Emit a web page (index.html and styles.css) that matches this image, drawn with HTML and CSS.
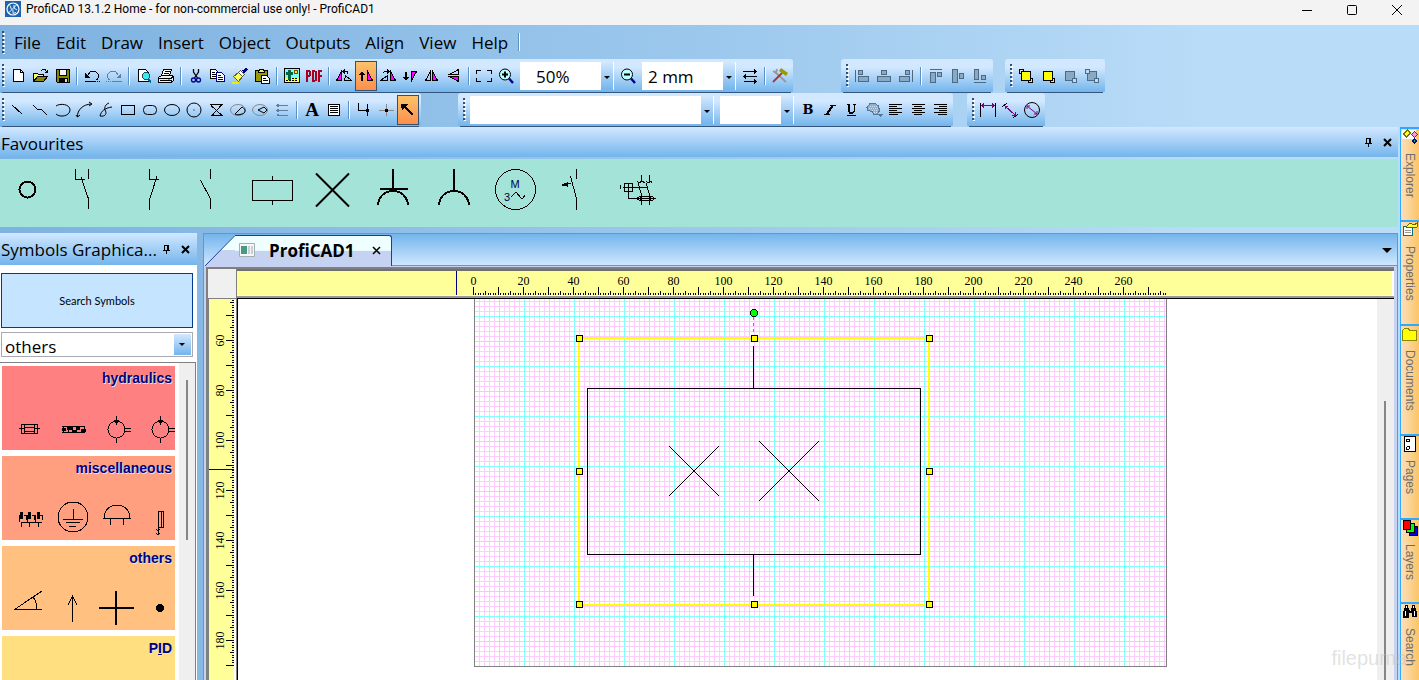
FILE: index.html
```html
<!DOCTYPE html>
<html lang="en">
<head>
<meta charset="utf-8">
<title>ProfiCAD 13.1.2 Home - for non-commercial use only! - ProfiCAD1</title>
<link rel="stylesheet" href="styles.css">
</head>
<body>
<div class="app">
  <header class="titlebar">
    <svg class="logo" width="16" height="16" viewBox="0 0 16 16"><rect width="16" height="16" fill="#1f62ad"/><circle cx="8" cy="8" r="6" fill="none" stroke="#fff" stroke-width="1.2"/><path d="M3.500 12L12 3.500M5 4.500l1.500 4M8 8.500v4l3-1M9 4v3l3 2" stroke="#dff" fill="none"/></svg>
    <h1 class="title">ProfiCAD 13.1.2 Home - for non-commercial use only! - ProfiCAD1</h1>
    <div class="winbtns">
      <button class="winbtn" aria-label="Minimize"><svg width="12" height="12"><path d="M1 6.500h10"/></svg></button>
      <button class="winbtn" aria-label="Maximize"><svg width="12" height="12"><rect x="1.500" y="1.500" width="9" height="9" rx="1"/></svg></button>
      <button class="winbtn" aria-label="Close"><svg width="12" height="12"><path d="M1 1l10 10M11 1L1 11"/></svg></button>
    </div>
  </header>

  <nav class="menubar">
    <span class="grip"></span>
    <button class="menu">File</button><button class="menu">Edit</button><button class="menu">Draw</button><button class="menu">Insert</button><button class="menu">Object</button><button class="menu">Outputs</button><button class="menu">Align</button><button class="menu">View</button><button class="menu">Help</button>
    <span class="sep"></span>
  </nav>

  <div class="toolrow">
    <div class="toolbar first">
      <span class="grip"></span>
      <button class="tool" aria-label="New"><svg viewBox="0 0 16 16"><path fill="#fff" stroke="#000" d="M3.500 1.500h7l3 3v9h-10z"/><path stroke="#000" fill="none" d="M10.500 1.500v3h3"/></svg></button>
      <button class="tool" aria-label="Open"><svg viewBox="0 0 16 16"><path fill="#ff6" stroke="#000" d="M1.500 13.500v-8h4l1 1h5v3"/><path fill="#880" stroke="#000" d="M1.500 13.500l4-5h10l-4 5z"/><path fill="none" stroke="#000" d="M9 2.500l2-1h2l2 3M15.500 1.500v3h-3"/></svg></button>
      <button class="tool" aria-label="Save"><svg viewBox="0 0 16 16"><path fill="#880" stroke="#000" d="M2.500 1.500h13v13h-12l-1-1z"/><path fill="#f4f4f4" stroke="#000" d="M5.500 1.500h7v6h-7z"/><path fill="#000" d="M5 10h9v5H5z"/><path fill="#ddd" d="M11 11h2v3h-2z"/></svg></button>
      <span class="sep"></span>
      <button class="tool" aria-label="Undo"><svg viewBox="0 0 16 16"><path fill="none" stroke="#000" d="M3.500 7.500l3-4h5l3 3v3l-2 2.500M1 13.500h10"/><path d="M1 5v5h5z"/><path stroke="#000" stroke-dasharray="1 1" d="M11 13.500h5"/></svg></button>
      <button class="tool" aria-label="Redo"><svg viewBox="0 0 16 16"><path fill="none" stroke="#5f7f9c" d="M12.500 7.500l-3-4h-5l-3 3v3l2 2.500M6 13.500h10"/><path fill="#5f7f9c" d="M15 5v5h-5z"/><path stroke="#5f7f9c" stroke-dasharray="1 1" d="M0 13.500h5"/></svg></button>
      <span class="sep"></span>
      <button class="tool" aria-label="Print preview"><svg viewBox="0 0 16 16"><path fill="#fff" stroke="#000" d="M2.500 1.500h7l3 3v9h-10z"/><circle cx="10" cy="8" r="3.500" fill="#3ee" stroke="#246"/><path stroke="#068" stroke-width="2" d="M12 11l3 3.500"/></svg></button>
      <button class="tool" aria-label="Print"><svg viewBox="0 0 16 16"><path fill="#fff" stroke="#000" d="M5.500 1.500h8l-2 6h-8z"/><path stroke="#000" d="M7 3.500h5M6 5.500h5"/><path fill="#eee" stroke="#000" d="M.500 9.500l3-2h11l1 1v4l-2 2h-13z"/><path fill="none" stroke="#000" d="M1 10.500h12l2-2M2 12.500h11v2"/><path stroke="#aa0" d="M10 11.500h2"/></svg></button>
      <span class="sep"></span>
      <button class="tool" aria-label="Cut"><svg viewBox="0 0 16 16" class="smooth"><path fill="none" stroke="#000" stroke-width="1.300" d="M5.500 1v3l4 6M10.500 1v3l-4 6"/><circle cx="5.500" cy="12" r="2" fill="none" stroke="#008" stroke-width="1.300"/><circle cx="10.500" cy="12" r="2" fill="none" stroke="#008" stroke-width="1.300"/></svg></button>
      <button class="tool" aria-label="Copy"><svg viewBox="0 0 16 16"><path fill="#fff" stroke="#000" d="M.500 1.500h5l3 3v6h-8z"/><path stroke="#000" d="M2 4.500h3M2 6.500h4M2 8.500h4"/><path fill="#fff" stroke="#008" d="M6.500 4.500h5l3 3v6h-8z"/><path stroke="#008" d="M8 7.500h3M8 9.500h5M8 11.500h5"/></svg></button>
      <button class="tool" aria-label="Format painter"><svg viewBox="0 0 16 16"><path fill="#ff5" stroke="#660" d="M1.500 8.500l5-4 4 4-4 5z"/><path fill="#fff" stroke="#555" d="M6.500 4.500l2-2 4 4-2 2z"/><path stroke="#008" stroke-width="3" d="M11 4l4-3.500"/><path stroke="#ee0" stroke-width="2" d="M0 15h7"/></svg></button>
      <button class="tool" aria-label="Paste"><svg viewBox="0 0 16 16"><path fill="#990" stroke="#000" d="M1.500 2.500h12v11h-12z"/><path fill="#ee6" stroke="#000" d="M4.500 3.500l1-2h4l1 2v1h-6z"/><path fill="#fff" stroke="#000" d="M7.500 7.500h5l3 3v5h-8z"/><path stroke="#000" d="M9 10.500h3M9 12.500h5"/></svg></button>
      <span class="sep"></span>
      <button class="tool" aria-label="Image"><svg viewBox="0 0 16 16"><path fill="#7ff" stroke="#000" d="M.500 .500h15v14h-15z"/><path fill="#ff3" d="M1 10h14v4H1z"/><path fill="#064" d="M2 4h2V2h3v2h2v3H7v5H4V7H2z"/><circle cx="12" cy="4" r="1.800" fill="#fe0" stroke="#840"/><path stroke="#000" stroke-dasharray="2 1" d="M8 10.500h6M2 12.500h12"/></svg></button>
      <button class="tool" aria-label="Export PDF"><svg viewBox="0 0 16 16"><path fill="none" stroke="#a80020" stroke-width="2" d="M1 14V3h2l1 1v3l-1 1H1M7 3v10h1l2-1V4L8 3zM13 14V3h3M13 8h3"/></svg></button>
      <span class="sep"></span>
      <button class="tool" aria-label="Rotate left"><svg viewBox="0 0 16 16"><path fill="#f0f" stroke="#000" d="M.500 12.500h5v-9z"/><path fill="none" stroke="#000" d="M8.500 12.500h7l-6-5zM7 3.500h4l1 2M9 1.500l-2 2 2 2"/></svg></button>
      <button class="tool on" aria-label="Default orientation" aria-pressed="true"><svg viewBox="0 0 16 16"><path stroke="#000" stroke-width="1.500" d="M4 4v9"/><path d="M1 7h6L4 3z"/><path fill="#f0f" stroke="#000" d="M9.500 3.500v9h5z"/></svg></button>
      <button class="tool" aria-label="Rotate right"><svg viewBox="0 0 16 16"><path fill="#f0f" stroke="#000" d="M10.500 3.500v9h5z"/><path fill="none" stroke="#000" d="M.500 12.500h7v-5zM3 5l2-1.500h4M7 1.500l2 2-2 2"/></svg></button>
      <button class="tool" aria-label="Rotate 180"><svg viewBox="0 0 16 16"><path stroke="#000" stroke-width="1.500" d="M4 4v6"/><path d="M1 9h6L4 13z"/><path fill="#f0f" stroke="#000" d="M9.500 12.500v-9h5z"/></svg></button>
      <button class="tool" aria-label="Flip horizontal"><svg viewBox="0 0 16 16"><path fill="none" stroke="#000" d="M6.500 3.500v9h-5z"/><path fill="#f0f" stroke="#000" d="M8.500 3.500v9h5z"/></svg></button>
      <button class="tool" aria-label="Flip vertical"><svg viewBox="0 0 16 16"><path fill="none" stroke="#000" d="M12.500 1.500v5h-9z"/><path fill="#f0f" stroke="#000" d="M12.500 13.500v-5h-9z"/></svg></button>
      <span class="sep"></span>
      <button class="tool" aria-label="Fit page"><svg viewBox="0 0 16 16"><path fill="none" stroke="#000" d="M5 2.500H.500V6M11 2.500h4.500V6M5 13.500H.500V10M11 13.500h4.500V10"/></svg></button>
      <button class="tool" aria-label="Zoom in"><svg viewBox="0 0 16 16" class="smooth"><circle cx="7" cy="6.500" r="5.500" fill="#bff" stroke="#000"/><path stroke="#000" stroke-width="2" d="M4 6.500h6M7 3.500v6"/><path stroke="#009" stroke-width="2.500" d="M11 10.500l4 4.500"/></svg></button>
      <span class="combo zoomc"><select aria-label="Zoom"><option>50%</option></select></span>
      <button class="tool" aria-label="Zoom out"><svg viewBox="0 0 16 16" class="smooth"><circle cx="7" cy="6.500" r="5.500" fill="#bff" stroke="#000"/><path stroke="#000" stroke-width="2" d="M4 6.500h6"/><path stroke="#009" stroke-width="2.500" d="M11 10.500l4 4.500"/></svg></button>
      <span class="combo gridc"><select aria-label="Grid step"><option>2 mm</option></select></span>
      <button class="tool" aria-label="Swap wires"><svg viewBox="0 0 16 16"><path fill="none" stroke="#000" d="M1 3.500h13M12 1.500l2 2-2 2M2 8.500h13M4 6.500l-2 2 2 2M2 13.500h12M12 11.500l2 2-2 2"/></svg></button>
      <span class="sep"></span>
      <button class="tool" aria-label="Settings"><svg viewBox="0 0 16 16" class="smooth"><path stroke="#999" stroke-width="2" d="M3 4l11 10"/><path fill="none" stroke="#999" stroke-width="2" d="M1 3l3 2 1-4"/><path stroke="#a33" stroke-width="1.800" d="M1 14l9-9"/><path stroke="#990" stroke-width="3.500" d="M8 1.500l7 5"/></svg></button>
    </div>

    <div class="toolbar gap-l">
      <span class="grip"></span>
      <button class="tool" aria-label="Align left"><svg viewBox="0 0 16 16" class="dis"><path d="M1.500 2v12M4.500 2.500h4v4h-4zM4.500 8.500h10v5h-10z"/></svg></button>
      <button class="tool" aria-label="Align centre"><svg viewBox="0 0 16 16" class="dis"><path d="M5.500 2.500h5v4h-5zM1.500 8.500h13v5h-13z"/></svg></button>
      <button class="tool" aria-label="Align right"><svg viewBox="0 0 16 16" class="dis"><path d="M14.500 2v12M7.500 2.500h4v4h-4zM1.500 8.500h10v5h-10z"/></svg></button>
      <span class="sep"></span>
      <button class="tool" aria-label="Align top"><svg viewBox="0 0 16 16" class="dis"><path d="M2 1.500h12M2.500 4.500h5v10h-5zM9.500 4.500h4v4h-4z"/></svg></button>
      <button class="tool" aria-label="Align middle"><svg viewBox="0 0 16 16" class="dis"><path d="M2.500 1.500h5v13h-5zM9.500 5.500h4v5h-4z"/></svg></button>
      <button class="tool" aria-label="Align bottom"><svg viewBox="0 0 16 16" class="dis"><path d="M2 14.500h12M2.500 1.500h4v10h-4zM9.500 7.500h4v4h-4z"/></svg></button>
    </div>

    <div class="toolbar gap-s">
      <span class="grip"></span>
      <button class="tool" aria-label="Bring to front"><svg viewBox="0 0 16 16"><path fill="#cde" stroke="#000" d="M1.500 1.500h4v4h-4zM10.500 10.500h4v4h-4z"/><path fill="#ff0" stroke="#000" d="M3.500 3.500h9v9h-9z"/></svg></button>
      <button class="tool" aria-label="Bring forward"><svg viewBox="0 0 16 16"><path fill="#cde" stroke="#000" d="M10.500 10.500h4v4h-4z"/><path fill="#ff0" stroke="#000" d="M3.500 3.500h9v9h-9z"/></svg></button>
      <button class="tool" aria-label="Send backward"><svg viewBox="0 0 16 16"><path fill="#8aa9c4" stroke="#4d6a85" d="M3.500 3.500h9v9h-9z"/><path fill="#bcd9f5" stroke="#4d6a85" d="M10.500 10.500h4v4h-4z"/></svg></button>
      <button class="tool" aria-label="Send to back"><svg viewBox="0 0 16 16"><path fill="#8aa9c4" stroke="#4d6a85" d="M3.500 3.500h9v9h-9z"/><path fill="#bcd9f5" stroke="#4d6a85" d="M1.500 1.500h4v4h-4zM10.500 10.500h4v4h-4z"/></svg></button>
    </div>
  </div>

  <div class="toolrow">
    <div class="toolbar first">
      <span class="grip"></span>
      <button class="tool" aria-label="Line"><svg viewBox="0 0 16 16" class="ln"><path d="M2 3l10 9"/></svg></button>
      <button class="tool" aria-label="Polyline"><svg viewBox="0 0 16 16" class="ln"><path d="M1 3l4 4h4l6 6"/></svg></button>
      <button class="tool" aria-label="Arc"><svg viewBox="0 0 16 16" class="ln smooth"><path d="M2 4c4-3 14-2 14 4s-10 8-14 4"/></svg></button>
      <button class="tool" aria-label="Curve"><svg viewBox="0 0 16 16" class="ln smooth"><path d="M1.500 15C1 8 7 2.500 15 2M0 13l1.500 2L4 13M13 0l3 2-3 2"/></svg></button>
      <button class="tool" aria-label="Bezier"><svg viewBox="0 0 16 16" class="ln smooth"><path d="M2 14c6 1 7-3 5-6-1-3 1-6 4-7M2 14c1-5 5-8 12-9"/></svg></button>
      <button class="tool" aria-label="Rectangle"><svg viewBox="0 0 16 16" class="ln"><path d="M1.500 3.500h13v9h-13z"/></svg></button>
      <button class="tool" aria-label="Rounded rectangle"><svg viewBox="0 0 16 16" class="ln smooth"><rect x="1.500" y="3.500" width="13" height="9" rx="4"/></svg></button>
      <button class="tool" aria-label="Ellipse"><svg viewBox="0 0 16 16" class="ln smooth"><ellipse cx="8" cy="8" rx="7.500" ry="5.500"/></svg></button>
      <button class="tool" aria-label="Circle"><svg viewBox="0 0 16 16" class="ln smooth"><circle cx="8" cy="8" r="7"/><path d="M7.500 8h1"/></svg></button>
      <button class="tool" aria-label="Polygon"><svg viewBox="0 0 16 16" class="ln"><path d="M2 2.500h12L4 13.500h10L3 3.500"/></svg></button>
      <button class="tool" aria-label="Pie"><svg viewBox="0 0 16 16" class="ln smooth"><ellipse cx="8" cy="8" rx="7.500" ry="5.500" stroke="#888"/><path d="M5 12l7-7c4 2 4 6 0 7-3 1-5 1-7 0"/></svg></button>
      <button class="tool" aria-label="Segment"><svg viewBox="0 0 16 16" class="ln smooth"><ellipse cx="8" cy="8" rx="7.500" ry="5.500" stroke="#888"/><path d="M15 8l-3-3-6 3 6 3z"/></svg></button>
      <button class="tool" aria-label="Bus"><svg viewBox="0 0 16 16" class="ln"><path stroke="#5f7f9c" d="M3 3.500h11M3 8.500h11M3 13.500h11M5 2l-2 1.500 2 1.500M5 7L3 8.500 5 10M5 12l-2 1.500"/></svg></button>
      <span class="sep"></span>
      <button class="tool glyph serif" aria-label="Text">A</button>
      <button class="tool" aria-label="Text frame"><svg viewBox="0 0 16 16" class="ln"><path fill="#fff" d="M2.500 2.500h11v11h-11z"/><path d="M4 4.500h8M4 6.500h8M4 8.500h8M4 10.500h8"/></svg></button>
      <span class="sep"></span>
      <button class="tool" aria-label="Wire"><svg viewBox="0 0 16 16" class="ln"><path d="M2.500 1v7.500h9M11.500 2v12"/><path class="fill" stroke="none" d="M10 7h3v3h-3z"/></svg></button>
      <button class="tool" aria-label="Junction"><svg viewBox="0 0 16 16" class="ln"><path stroke="#888" d="M1 8.500h15M8.500 2v12"/><path class="fill" stroke="none" d="M7 7h3v3H7z"/></svg></button>
      <button class="tool on" aria-label="Select" aria-pressed="true"><svg viewBox="0 0 16 16"><path stroke="#000" stroke-width="2" d="M5 5l8 8"/><path d="M1 2h7L2 9z"/></svg></button>
    </div>

    <div class="toolbar gap-l2">
      <span class="grip"></span>
      <span class="combo fontc"><select aria-label="Font"><option></option></select></span>
      <span class="combo sizec"><select aria-label="Font size"><option></option></select></span>
      <button class="tool glyph" aria-label="Bold"><b>B</b></button>
      <button class="tool" aria-label="Italic"><svg viewBox="0 0 16 16"><path stroke="#000" stroke-width="2" d="M11 3L5 12"/><path stroke="#000" d="M8 3.500h6M2 12.500h6"/></svg></button>
      <button class="tool" aria-label="Underline"><svg viewBox="0 0 16 16"><path fill="none" stroke="#000" stroke-width="2" d="M5 2v7l1 2h3"/><path fill="none" stroke="#000" d="M3 2.500h3M9 2.500h3M10.500 3v6l-2 2M3 13.500h9"/></svg></button>
      <button class="tool" aria-label="Font colour"><svg viewBox="0 0 16 16"><path fill="#8fb0cf" stroke="#54789a" d="M4 1.500h5l3 2 1 3v3l-2 3H8l-2-3-4-1-1-3z"/><path stroke="#cfe3f5" stroke-dasharray="1 1" d="M4 4.500h7M3 6.500h9M6 8.500h6M8 10.500h3"/><path fill="#54789a" d="M11 12h6l-3 3z"/></svg></button>
      <button class="tool" aria-label="Text left"><svg viewBox="0 0 16 16" class="ln"><path d="M1 2.500h13M1 4.500h8M1 6.500h13M1 8.500h8M1 10.500h13M1 12.500h9"/></svg></button>
      <button class="tool" aria-label="Text centre"><svg viewBox="0 0 16 16" class="ln"><path d="M2 2.500h13M4 4.500h8M2 6.500h13M4 8.500h8M2 10.500h13M4 12.500h8"/></svg></button>
      <button class="tool" aria-label="Text right"><svg viewBox="0 0 16 16" class="ln"><path d="M2 2.500h13M7 4.500h8M2 6.500h13M7 8.500h8M2 10.500h13M6 12.500h9"/></svg></button>
    </div>

    <div class="toolbar gap-m">
      <span class="grip"></span>
      <button class="tool" aria-label="Linear dimension"><svg viewBox="0 0 16 16"><path stroke="#000" d="M.500 1v14M15.500 1v14"/><path fill="none" stroke="#80007f" d="M1 3.500h14M4 1.500l-2 2 2 2M12 1.500l2 2-2 2"/></svg></button>
      <button class="tool" aria-label="Aligned dimension"><svg viewBox="0 0 16 16"><path stroke="#000" d="M0 5l5-4M11 16l5-4"/><path fill="none" stroke="#80007f" d="M3 4l10 9M3 7V4h3M13 10v3h-3"/></svg></button>
      <button class="tool" aria-label="Diameter"><svg viewBox="0 0 16 16" class="smooth"><circle cx="8" cy="8" r="7.500" fill="none" stroke="#000"/><path fill="none" stroke="#80007f" d="M3 4l10 8M3 7V4h3M13 9v3h-3"/></svg></button>
    </div>
  </div>

  <div class="work">
    <div class="left">
      <section class="favs">
        <div class="phead"><h2>Favourites</h2>
          <button class="hbtn" aria-label="Pin"><svg width="9" height="9" viewBox="0 0 9 9"><path d="M2.500 0v5M2 .500h5M5.500 0v5M6.500 0v5M1 5.500h7M4.500 5v4"/></svg></button>
          <button class="hbtn" aria-label="Close"><svg width="9" height="9" viewBox="0 0 9 9" class="x"><path d="M1 1l7 7M8 1L1 8"/></svg></button>
        </div>
        <div class="strip">
          <button class="fav" aria-label="Terminal"><svg class="bold"><circle cx="27.500" cy="30.500" r="8"/></svg></button>
          <button class="fav" aria-label="Changeover contact"><svg><path d="M14.500 10v10.500h9M27.500 10v10M20 18l7.500 22v10"/></svg></button>
          <button class="fav" aria-label="Break contact"><svg><path d="M27.500 10v10.500h9M35 17l-7.500 24v10"/></svg></button>
          <button class="fav" aria-label="Make contact"><svg><path d="M27.500 10v10M17.500 21l10 19v10"/></svg></button>
          <button class="fav" aria-label="Coil"><svg><path d="M8.500 21.500h40v20h-40zM28.500 17v4M28.500 42v4"/></svg></button>
          <button class="fav" aria-label="Lamp"><svg class="bold smooth"><path d="M11 14.500l33 33M44 14.500l-33 33"/></svg></button>
          <button class="fav" aria-label="Socket with earth"><svg class="bold"><path d="M27 10v21M14 30h28M12 46c1-9 7-14 15-14s14 5 15 14"/></svg></button>
          <button class="fav" aria-label="Socket"><svg class="bold"><path d="M27 10v21M12 46c1-9 7-14 15-14s14 5 15 14"/></svg></button>
          <button class="fav" aria-label="Motor"><svg><circle cx="27.500" cy="30.500" r="20"/><text x="27" y="29" text-anchor="middle" class="m">M</text><text x="16" y="42" class="m">3</text><path d="M23 38l5-5 5 6h2l2-3"/></svg></button>
          <button class="fav" aria-label="Pressure switch"><svg><path d="M27.500 10v10M21.500 17l6 23v11M13 26l9-2"/><path class="fill" d="M13 26l5-2v3z"/></svg></button>
          <button class="fav" aria-label="Motor protection"><svg><path d="M10.500 26v4M14.500 24.500h8v8h-8zM18.500 24v9M13 28.500h25M18 33v6.500h8M26 39.500h20M26 39.500l4-2h12l3 2-3 2H30zM30.500 37.500h10v4h-10zM31.500 16v6M39.500 16v6M27 22l2 2 3-2 3 2M36 22l2 2 3-2 1 2M28 24l3 10v12M36 24l3 10v12"/></svg></button>
        </div>
      </section>

      <div class="lower">
        <section class="symbols">
          <div class="phead"><h2>Symbols Graphica...</h2>
            <button class="hbtn" aria-label="Pin"><svg width="9" height="9" viewBox="0 0 9 9"><path d="M2.500 0v5M2 .500h5M5.500 0v5M6.500 0v5M1 5.500h7M4.500 5v4"/></svg></button>
            <button class="hbtn" aria-label="Close"><svg width="9" height="9" viewBox="0 0 9 9" class="x"><path d="M1 1l7 7M8 1L1 8"/></svg></button>
          </div>
          <div class="sbody">
            <button class="search">Search Symbols</button>
            <span class="combo libc"><select aria-label="Symbol group"><option>others</option></select></span>
            <div class="list">
              <div class="groups">
                <div class="group red"><h3>hydraulics</h3><div class="cells">
                  <svg><path d="M14.500 18.500h16v9h-16zM17.500 21.500h10v4h-10zM17.500 18v9M27.500 18v9M12 22.500h5M28 22.500h5"/></svg>
                  <svg><path d="M11 20.500h23M11 26.500h23M12.500 20v6M17.500 20v6M33.500 20v6"/><path class="thick" d="M11 23.500h4M16 22.500h6M21 25h5M25 22.500h4M30 24h5"/></svg>
                  <svg><circle cx="21.500" cy="23.500" r="8.500"/><path d="M21.500 10v5M21.500 32v5M30 22.500h6M30 25.500h6"/><path class="fill" d="M19 14h5l-2.500 4z"/></svg>
                  <svg><circle cx="21.500" cy="23.500" r="8.500"/><path d="M21.500 10v5M21.500 32v5M30 22.500h6M30 25.500h6"/><path class="fill" d="M19 14h5l-2.500 4z"/></svg>
                </div></div>
                <div class="group coral"><h3>miscellaneous</h3><div class="cells">
                  <svg><path d="M14 26.500h21M12.500 19v7M20.500 19v7M28.500 19v7M14.500 27v4M22.500 27v4M31.500 27v4M17 19.500h2v4M25 19.500h2v4M33 19.500h2v4"/><path class="thick" d="M14.500 16v7M22.500 16v7M31 16v7"/></svg>
                  <svg><circle cx="22" cy="21" r="15"/><path d="M22.500 13v10M12 23.500h20M15 26.500h14M18 30.500h7"/></svg>
                  <svg><path d="M8 22.500h28M9 22c0-17 26-17 26 0M15.500 23v6M28.500 23v6"/></svg>
                  <svg><path d="M19.500 15.500h5v16h-5zM22.500 16v15M19.500 32v6M17 33l2 2 2-2M17 37l2 2 2-2"/></svg>
                </div></div>
                <div class="group orange"><h3>others</h3><div class="cells">
                  <svg><path d="M35 23.500H7.500L35 5M26 11c3 4 4 8 4 12"/></svg>
                  <svg><path d="M21.500 9v27M17 19l4.500-9 4.500 9"/></svg>
                  <svg class="bold"><path d="M21 5v34M4 22h35"/></svg>
                  <svg><circle class="fill" cx="21" cy="22" r="3.500"/></svg>
                </div></div>
                <div class="group yellow"><h3>P<u>I</u>D</h3></div>
              </div>
              <div class="scroll"><span class="thumb"></span></div>
            </div>
          </div>
        </section>

        <section class="doc">
          <div class="tabs">
            <svg class="slope" width="30" height="31" viewBox="0 0 30 31"><defs><linearGradient id="tabfill" x2="0" y2="1"><stop offset=".48" stop-color="#efffff"/><stop offset=".5" stop-color="#c5d2f2"/></linearGradient></defs><path fill="url(#tabfill)" d="M0 31L30 0v31z"/><path fill="none" stroke="#1c3f94" d="M0 31L30 .500"/></svg>
            <div class="tab">
              <svg width="16" height="14" viewBox="0 0 16 14"><path fill="#f4f6f8" stroke="#a5adb5" d="M.500 .500h15v13h-15z"/><path fill="#4a9a80" d="M2 3h6v8H2z"/><path fill="#c9d0d5" d="M9 3h2v8H9zM12 3h2v8h-2z"/></svg>
              <h2>ProfiCAD1</h2>
              <button class="hbtn" aria-label="Close document"><svg width="9" height="9" viewBox="0 0 9 9"><path d="M1 1l7 7M8 1L1 8"/></svg></button>
            </div>
            <button class="more" aria-label="Open documents"><svg width="10" height="5"><path d="M0 0h10L5 5z"/></svg></button>
          </div>
          <div class="view">
            <div class="corner"></div>
            <div class="hruler"><svg id="hruler"></svg></div>
            <div class="vruler"><svg id="vruler"></svg></div>
            <div class="canvas">
              <svg class="sheet">
                <defs>
                  <pattern id="fine" width="5" height="5" y="2" patternUnits="userSpaceOnUse"><path d="M0 .500h5M.500 0v5" stroke="#fcf"/></pattern>
                  <pattern id="coarse" width="25" height="25" y="17" patternUnits="userSpaceOnUse"><path d="M0 .500h25M.500 0v25" stroke="#80ffff"/></pattern>
                </defs>
                <g transform="translate(236 0)">
                  <rect width="693" height="368" fill="#fff"/>
                  <rect width="693" height="368" fill="url(#fine)"/>
                  <rect width="693" height="368" fill="url(#coarse)"/>
                  <path fill="none" stroke="#808080" d="M.500 0v367.500h692V0"/>
                  <path fill="none" stroke="#ff0" stroke-width="2" d="M105 39h350v267H105z"/>
                  <path fill="none" stroke="#000" d="M113.500 89.500h333v166h-333zM279.500 47v42M279.500 256v41"/>
                  <path fill="none" stroke="#000" d="M195 147l50 50M245 147l-50 50M285 142l60 60M345 142l-60 60"/>
                  <path stroke="#888" stroke-dasharray="3 3" d="M279.500 18v18"/>
                  <circle cx="280" cy="14" r="3.500" fill="#0f0" stroke="#000"/>
                  <path fill="#ff0" stroke="#000" d="M102.500 36.500h6v6h-6zM277.500 36.500h6v6h-6zM452.500 36.500h6v6h-6zM102.500 169.500h6v6h-6zM452.500 169.500h6v6h-6zM102.500 302.500h6v6h-6zM277.500 302.500h6v6h-6zM452.500 302.500h6v6h-6z"/>
                </g>
              </svg>
              <div class="scroll"><span class="thumb"></span></div>
            </div>
          </div>
        </section>
      </div>
    </div>

    <aside class="dock">
      <button class="dtab t1"><svg viewBox="0 0 16 16"><path fill="#fff" d="M0 1h14v9H0z"/><path fill="#ff3" stroke="#770" d="M1.500 5l4-4 3 3-4 4z"/><path fill="#f9c" stroke="#a0a" d="M9.500 5.500l3-3 3 3-3 3z"/><path fill="#0c5" stroke="#008" d="M10.500 12l2-2 2 2-2 2z"/></svg><span>Explorer</span></button>
      <button class="dtab t2"><svg viewBox="0 0 16 16"><path fill="#fff" stroke="#077" d="M1.500 4.500h9v9h-9z"/><path stroke="#999" d="M3 8.500h6M3 10.500h6"/><path fill="#ff3" stroke="#660" d="M4 5l4-4 4 2 3-2v4l-4 1z"/></svg><span>Properties</span></button>
      <button class="dtab t3"><svg viewBox="0 0 16 16"><path fill="#ff0" stroke="#880" d="M.500 4.500l2-2h4l1 2h7v10H.500z"/></svg><span>Documents</span></button>
      <button class="dtab t4"><svg viewBox="0 0 16 16"><path fill="#fff" stroke="#000" d="M2.500 .500h11v15h-11z"/><circle cx="6" cy="4.500" r="1.500" fill="none" stroke="#000"/><circle cx="6" cy="12" r="1.500" fill="none" stroke="#000"/></svg><span>Pages</span></button>
      <button class="dtab t4"><svg viewBox="0 0 16 16"><path fill="#00f" stroke="#000" d="M7.500 6.500h8v9h-8z"/><path fill="#0f0" stroke="#000" d="M4.500 3.500h8v9h-8z"/><path fill="#f00" stroke="#000" d="M1.500 .500h7v9h-7z"/></svg><span>Layers</span></button>
      <button class="dtab t6"><svg viewBox="0 0 16 16"><path d="M3 1h3v3h1v2h2V4h1V1h3v3h1v3h1v6h-5V9H7v5H1V7h1V4h1z"/><path stroke="#fff" d="M4.500 2v2M11.500 2v2M3.500 7v5M12.500 7v5M8 6.500h1"/></svg><span>Search</span></button>
    </aside>
  </div>
  <div class="watermark">filepuma</div>
</div>
<script src="rulers.js"></script>
</body>
</html>
```
FILE: styles.css
```css
* { box-sizing: border-box; }
body { margin: 0; font-family: "Open Sans", "Noto Sans", sans-serif; color: #000; }
button, select { font: inherit; color: inherit; border: 0; background: none; padding: 0; margin: 0; }
h1, h2, h3 { margin: 0; font-weight: normal; }
svg { display: block; }

.app { position: relative; height: 100vh; display: flex; flex-direction: column; overflow: hidden; background: linear-gradient(90deg, #7eb2e0, #9cc8ed 50%, #b9dcf8 85%); }

.titlebar { height: 25px; flex: none; background: #f3f3f3; display: flex; align-items: flex-start; padding-left: 5px; }
.logo { margin-top: 1px; }
.title { font: 12px/19px Roboto, sans-serif; margin-left: 5px; flex: 1; white-space: nowrap; }
.winbtns { display: flex; }
.winbtn { width: 45px; height: 19px; display: flex; align-items: center; justify-content: center; }
.winbtn svg { fill: none; stroke: #000; }

.menubar { height: 34px; flex: none; display: flex; align-items: center; gap: 15px; font-size: 17px; }
.menubar .grip { margin-right: -8px; }
.menubar .sep { height: 18px; margin-left: -8px; }
.grip { width: 7px; height: 23px; flex: none; background: repeating-linear-gradient(#33506e 0 2px, transparent 2px 4px) 2px 0 / 2px 100% no-repeat, repeating-linear-gradient(transparent 0 1px, #fff 1px 3px, transparent 3px 4px) 3px 1px / 2px 100% no-repeat; }
.sep { width: 8px; height: 18px; flex: none; background: linear-gradient(90deg, #5a91c4 1px, #fff 1px 2px) 3px 0 / 2px 100% no-repeat; }

.toolrow { height: 34px; flex: none; display: flex; }
.toolbar { height: 34px; display: flex; align-items: center; padding: 0 2px 1px 3px; border-radius: 3px; background: linear-gradient(#34557d, #34557d) 2px 100% / calc(100% - 4px) 1px no-repeat, linear-gradient(#d2e8ff 25%, #73b5ec) 0 0 / 100% 33px no-repeat; }
.toolbar.first { padding-left: 0; border-radius: 0 3px 3px 0; }
.gap-l { margin-left: 48px; }
.gap-s { margin-left: 12px; }
.gap-l2 { margin-left: 37px; }
.gap-m { margin-left: 14px; }
.tool { width: 22px; height: 30px; flex: none; display: flex; align-items: center; justify-content: center; }
.tool svg { width: 16px; height: 16px; shape-rendering: crispEdges; overflow: visible; }
.tool.on { background: linear-gradient(#fdc36a, #fb8f4d); border: 1px solid #33506e; }
.ln { fill: none; stroke: #000; }
.dis { fill: #8aa9c4; stroke: #4d6a85; }
.glyph { font-family: "DejaVu Serif", serif; font-size: 13px; font-weight: bold; }
.glyph.serif { font-family: "Liberation Serif", serif; font-size: 19px; }

.combo { position: relative; display: block; height: 28px; background: #fff; border-right: 1px solid #fff; }
.combo select { width: 100%; height: 100%; appearance: none; font-size: 17px; padding: 2px 0 0 6px; background: linear-gradient(#d2e8ff, #73b5ec) 100% 0 / 12px 100% no-repeat; outline: 0; }
.combo::after { content: ""; position: absolute; right: 3px; top: 14px; border: 3px solid transparent; border-top-color: #000; border-bottom: 0; pointer-events: none; }
.zoomc, .gridc { width: 94px; margin: 0 3px; }
.zoomc select { padding-left: 16px; }
.fontc { width: 244px; margin-right: 6px; margin-left: 2px; }
.sizec { width: 74px; margin-right: 3px; }

.work { flex: 1; min-height: 0; display: flex; gap: 2px; }
.left { flex: 1; min-width: 0; display: flex; flex-direction: column; gap: 6px; }
.phead { height: 30px; display: flex; align-items: center; padding: 0 1px; background: linear-gradient(#d2e8ff, #73b5ec); }
.phead h2 { flex: 1; font-size: 17px; line-height: 24px; white-space: nowrap; padding-top: 4px; }
.hbtn { width: 19px; height: 19px; flex: none; display: flex; align-items: center; justify-content: center; }
.hbtn svg { fill: none; stroke: #000; shape-rendering: crispEdges; }
.hbtn svg.x, .tab .hbtn svg { shape-rendering: auto; stroke-width: 2; }
.tab .hbtn svg { stroke-width: 1.5; }

.strip { height: 68px; margin-top: 2px; display: flex; background: #a4e4d8; }
.fav { width: 61px; height: 68px; flex: none; }
.fav svg { width: 61px; height: 68px; }
.fav svg, .cells svg { fill: none; stroke: #000; shape-rendering: crispEdges; }
.fav svg.bold, .cells svg.bold { stroke-width: 2; }
.tool svg.smooth, .fav svg.smooth { shape-rendering: auto; }
.fill { fill: #000; }
.thick { stroke-width: 3; }
.m { font: 11px "Liberation Sans", sans-serif; fill: #000040; stroke: none; }

.lower { flex: 1; min-height: 0; display: flex; gap: 6px; }
.symbols { width: 197px; flex: none; display: flex; flex-direction: column; }
.symbols .phead { height: 32px; padding-right: 2px; }
.symbols .phead h2 { padding-top: 2px; }
.sbody { flex: 1; min-height: 0; background: #fff; padding: 8px 1px 0 0; display: flex; flex-direction: column; }
.search { height: 55px; flex: none; margin: 0 3px 4px 1px; background: #c4e4ff; border: 1px solid #003c8f; font: 11px Lato, sans-serif; }
.libc { height: 25px; flex: none; margin: 0 3px 5px 1px; border: 1px solid #a9abb0; }
.libc select { padding: 2px 0 0 3px; background-size: 17px 21px; background-position: calc(100% - 1px) 1px; }
.libc::after { top: 10px; right: 7px; }
.list { flex: 1; min-height: 0; display: flex; border: 1px solid #808080; border-width: 1px 1px 0 0; }
.groups { flex: 1; min-width: 0; overflow: hidden; padding: 3px 4px 0 2px; display: flex; flex-direction: column; gap: 6px; }
.group { height: 84px; flex: none; display: flex; flex-direction: column; justify-content: space-between; overflow: hidden; padding: 3px 3px 0 5px; }
.group h3 { font: bold 14px/18px "Liberation Sans", sans-serif; color: #000080; text-align: right; text-shadow: 1px 1px #dce6f5; }
.red { background: #ff8080; }
.coral { background: #ff9f80; }
.orange { background: #ffc080; }
.yellow { background: #ffdf80; }
.cells { display: flex; margin-right: -3px; }
.cells svg { width: 44px; height: 44px; flex: none; }
.scroll { width: 16px; flex: none; background: #efefef; position: relative; }
.thumb { position: absolute; left: 7px; top: 17px; width: 2px; height: 160px; background: #868686; }

.doc { flex: 1; min-width: 0; display: flex; flex-direction: column; border: 1px solid #30a8ff; border-bottom: 0; background: #c5d2f2; }
.tabs { height: 32px; flex: none; display: flex; align-items: flex-end; background: linear-gradient(#30a8ff, #30a8ff) 188px 100% / 100% 1px no-repeat, linear-gradient(#73b5ec, #d2e8ff); }
.slope { margin-left: 1px; flex: none; }
.tab { height: 31px; display: flex; align-items: center; padding: 0 5px 2px 4px; border: 1px solid #1c3f94; border-width: 1px 1px 0 0; border-radius: 0 3px 0 0; background: linear-gradient(#efffff 48%, #c5d2f2 50%); }
.tab h2 { font-size: 17px; font-weight: bold; margin: 0 12px 0 14px; }
.more { margin: 0 5px 13px auto; }
.view { flex: 1; min-height: 0; margin: 1px 3px 0 2px; border: 2px solid #808080; border-width: 2px 0 0 2px; display: grid; grid-template-columns: 29px 1fr; grid-template-rows: 29px 1fr; background: #f4f4f4; }
.corner { background: #f0f0f0; border-right: 1px solid #808080; }
.hruler { border-top: 2px solid #707070; border-bottom: 2px solid #999; padding: 0 2px 1px 0; background: #fff; }
.hruler svg { width: 100%; height: 24px; background: #ffff99; }
.vruler { border: 1px solid #808080; border-width: 1px 1px 0 1px; padding-right: 2px; overflow: hidden; background: #fff; }
.vruler svg { width: 100%; height: 100%; background: #ffff99; }
.vruler svg, .hruler svg { shape-rendering: crispEdges; }
.ticks { stroke: #000; }
.mark { stroke: #000080; }
.num { font: 12px "Liberation Serif", serif; text-anchor: middle; }
.canvas { min-width: 0; min-height: 0; overflow: hidden; border: 1px solid #000; border-width: 1px 0 0 1px; background: #fff; display: flex; }
.sheet { flex: 1; min-width: 0; height: 100%; shape-rendering: crispEdges; }
.canvas .scroll { width: 17px; }
.canvas .thumb { top: 102px; height: 100%; }

.dock { width: 19px; flex: none; display: flex; flex-direction: column; border-left: 1px solid #30a8ff; }
.dtab { flex: none; width: 100%; overflow: hidden; display: flex; flex-direction: column; align-items: center; border-top: 2px solid #30a8ff; background: linear-gradient(90deg, #fbdfbd, #fbc566); font: 12px "Liberation Sans", sans-serif; color: #6d6d6d; }
.dtab svg { width: 16px; height: 16px; flex: none; margin-bottom: 8px; shape-rendering: crispEdges; }
.dtab span { writing-mode: vertical-rl; line-height: 14px; }
.t1 { height: 93px; }
.t2 { height: 104px; }
.t3 { height: 110px; }
.t4 { height: 84px; }
.t6 { height: auto; flex: 1 0 78px; }

.watermark { position: absolute; right: 12px; bottom: 10px; font: 20px/24px "Liberation Sans", sans-serif; color: rgba(190, 190, 190, .45); pointer-events: none; }
```
FILE: rulers.js
```js
// Draws the drawing rulers: one tick per millimetre, longer at 5 and 10, a number at 20.
const NS = "http://www.w3.org/2000/svg";
const SCALE = 2.5;

function add(parent, tag, attrs, text) {
  const el = document.createElementNS(NS, tag);
  for (const k in attrs) el.setAttribute(k, attrs[k]);
  if (text !== undefined) el.textContent = text;
  parent.appendChild(el);
}

function ruler(id, vertical, first, last, origin, depth, mark) {
  const svg = document.getElementById(id);
  let d = "";
  for (let u = first; u <= last; u++) {
    const p = Math.floor(origin + u * SCALE) + 0.5;
    const len = u % 10 === 0 ? 8 : u % 5 === 0 ? 4 : 2;
    d += vertical ? `M${depth - len} ${p}h${len}` : `M${p} ${depth - len}v${len}`;
    if (u % 20 === 0 && u < 270) {
      add(svg, "text", vertical
        ? { class: "num", transform: `translate(15 ${p}) rotate(-90)` }
        : { class: "num", x: p, y: 14 }, u);
    }
  }
  add(svg, "path", { class: "ticks", d });
  add(svg, "path", { class: "mark", d: vertical ? `M0 ${mark}.5h${depth}` : `M${mark}.5 0v${depth}` });
}

ruler("hruler", false, 0, 277, 236, 24, 219);
ruler("vruler", true, 44, 190, -109, 25, 170);
```
